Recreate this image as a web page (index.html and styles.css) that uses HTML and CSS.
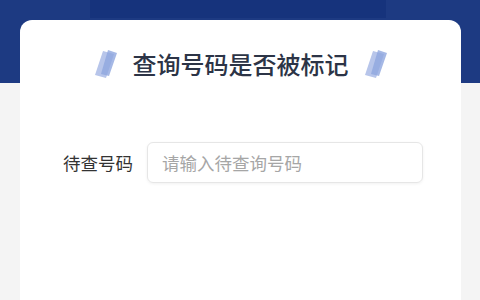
FILE: index.html
```html
<!DOCTYPE html>
<html lang="zh-CN">
<head>
<meta charset="utf-8">
<link rel="stylesheet" href="styles.css">
</head>
<body>
<div class="header">
  <div class="header-strip"></div>
</div>
<div class="card">
  <div class="title-row">
    <svg class="deco" width="26" height="32" viewBox="0 0 26 32">
      <polygon points="10,3 21,6 13,30 2,27" fill="#b7c5ea"/>
      <polygon points="15,2 24,5 16,28 8,26" fill="#8fa6de" opacity="0.8"/>
    </svg>
    <h1 class="title">查询号码是否被标记</h1>
    <svg class="deco" width="26" height="32" viewBox="0 0 26 32">
      <polygon points="10,3 21,6 13,30 2,27" fill="#b7c5ea"/>
      <polygon points="15,2 24,5 16,28 8,26" fill="#8fa6de" opacity="0.8"/>
    </svg>
  </div>
  <div class="form-row">
    <label class="label">待查号码</label>
    <div class="input">请输入待查询号码</div>
  </div>
</div>
</body>
</html>
```
FILE: styles.css
```css
html, body {
  margin: 0;
  padding: 0;
}
body {
  background: #f4f4f4;
  font-family: "Noto Sans CJK SC", "Noto Sans", sans-serif;
  height: 300px;
  overflow: hidden;
}
.header {
  height: 83px;
  background: #1d3a82;
  display: flex;
  justify-content: center;
}
.header-strip {
  width: 296px;
  height: 18px;
  background: #16337c;
  margin-left: -5px;
}
.card {
  margin: -63px 0 0 20px;
  width: 441px;
  height: 280px;
  background: #ffffff;
  border-radius: 12px 12px 0 0;
  box-sizing: border-box;
  padding: 27px 0 0 43px;
}
.title-row {
  display: flex;
  align-items: center;
  justify-content: center;
  gap: 14px;
  margin-left: -43px;
  height: 34px;
}
.title {
  margin: 0;
  font-size: 24px;
  line-height: 34px;
  font-weight: 500;
  color: #2c3446;
}
.deco {
  display: block;
}
.form-row {
  display: flex;
  align-items: center;
  gap: 14px;
  margin-top: 61px;
}
.label {
  font-size: 17.5px;
  color: #333333;
  width: 70px;
  white-space: nowrap;
}
.input {
  width: 276px;
  height: 41px;
  box-sizing: border-box;
  border: 1px solid #e6e6e6;
  border-radius: 6px;
  box-shadow: 0 1px 3px rgba(0,0,0,0.06);
  padding-left: 14px;
  font-size: 17.5px;
  line-height: 39px;
  color: #a6a6a6;
  white-space: nowrap;
}
```
